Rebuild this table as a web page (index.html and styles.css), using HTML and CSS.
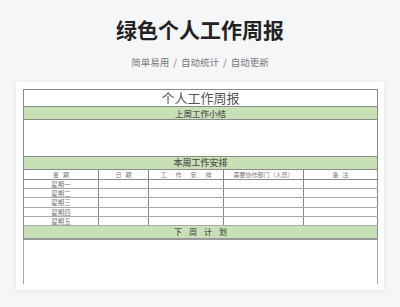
FILE: index.html
```html
<!DOCTYPE html>
<html lang="zh">
<head>
<meta charset="utf-8">
<link rel="stylesheet" href="styles.css">
</head>
<body>
<header class="head">
  <h1 class="title">绿色个人工作周报</h1>
  <p class="sub">简单易用<span class="sep">/</span>自动统计<span class="sep">/</span>自动更新</p>
</header>
<section class="card">
  <div class="clip">
    <table class="sheet">
      <colgroup>
        <col class="c1"><col class="c2"><col class="c3"><col class="c4"><col class="c5">
      </colgroup>
      <tr class="r-title"><td colspan="5">个人工作周报</td></tr>
      <tr class="r-green"><td colspan="5">上周工作小结</td></tr>
      <tr class="r-blank"><td colspan="5"></td></tr>
      <tr class="r-green r-big"><td colspan="5">本周工作安排</td></tr>
      <tr class="r-head">
        <td class="sp1">星期</td>
        <td class="sp1">日期</td>
        <td class="sp2">工作安排</td>
        <td>需要协作部门（人员）</td>
        <td class="sp1">备注</td>
      </tr>
      <tr class="r-day"><td>星期一</td><td></td><td></td><td></td><td></td></tr>
      <tr class="r-day"><td>星期二</td><td></td><td></td><td></td><td></td></tr>
      <tr class="r-day"><td>星期三</td><td></td><td></td><td></td><td></td></tr>
      <tr class="r-day"><td>星期四</td><td></td><td></td><td></td><td></td></tr>
      <tr class="r-day"><td>星期五</td><td></td><td></td><td></td><td></td></tr>
      <tr class="r-green r-next"><td colspan="5">下周计划</td></tr>
      <tr class="r-last"><td colspan="5"></td></tr>
    </table>
  </div>
</section>
</body>
</html>
```
FILE: styles.css
```css
* { box-sizing: border-box; }
html, body { margin: 0; padding: 0; }
body {
  background: #f5f6f8;
  font-family: "Noto Sans CJK SC", "Noto Sans", sans-serif;
  width: 400px;
  height: 307px;
  overflow: hidden;
}
.head { text-align: center; padding-top: 14px; }
.title {
  margin: 0;
  font-size: 21px;
  line-height: 30px;
  font-weight: 700;
  color: #222;
}
.sub {
  margin: 11px 0 0;
  font-size: 9.5px;
  line-height: 14px;
  color: #777;
}
.sep { margin: 0 4px; }
.card {
  margin: 13px 16px 0;
  height: 208px;
  background: #fff;
  padding: 7px 7px 6px 7px;
  box-shadow: 0 1px 5px rgba(0,0,0,0.07);
}
.clip {
  height: 195px;
  overflow: hidden;
  margin: 0 -3px;
  padding: 0 3px;
}
.sheet {
  width: 354px;
  border-collapse: collapse;
  table-layout: fixed;
  color: #666;
}
.c1 { width: 75px; }
.c2 { width: 50px; }
.c3 { width: 75px; }
.c4 { width: 80px; }
.c5 { width: 74px; }
.sheet td {
  border: 1px solid #8a8a8a;
  padding: 0;
  text-align: center;
  vertical-align: middle;
  white-space: nowrap;
  overflow: hidden;
}
.r-title td { height: 17px; font-size: 13px; line-height: 16px; color: #555; }
.r-green td { background: #c8e0b6; height: 13px; font-size: 8.5px; line-height: 12px; color: #555; font-weight: 500; }
.r-big td { font-size: 9px; height: 12px; }
.r-next td { letter-spacing: 7px; text-indent: 7px; font-size: 8px; border-bottom: 2px solid #9a9a9a; }
.r-blank td { height: 37px; }
.r-head td { height: 10px; font-size: 6px; line-height: 8px; color: #777; }
.r-head td.sp1 { letter-spacing: 4px; text-indent: 4px; }
.r-head td.sp2 { letter-spacing: 9px; text-indent: 9px; }
.r-day td { height: 9.2px; font-size: 6.5px; line-height: 8px; color: #777; border-top-color: #aaa; border-bottom-color: #aaa; }
.r-day td + td { border-left-color: #555; }
.r-last td { height: 80px; border-left-color: #aaa; border-right-color: #aaa; }
```
